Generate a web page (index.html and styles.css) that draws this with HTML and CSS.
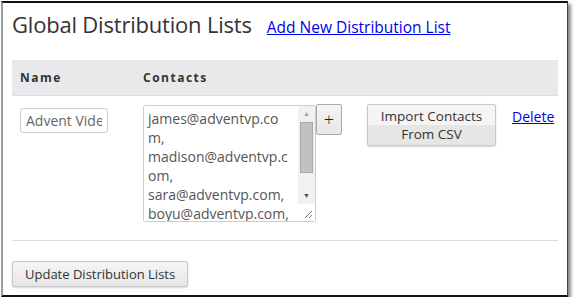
FILE: index.html
```
<!DOCTYPE html>
<html lang="en">
<head>
    <meta charset="UTF-8">
    <title>Global Distribution Lists</title>
    <link rel="stylesheet" href="styles.css">
</head>
<body>

<div class="frame">
    <div class="title-row">
        <h1>Global Distribution Lists</h1>
        <a href="#" class="add-link">Add New Distribution List</a>
    </div>

    <table class="lists">
        <tr>
            <th class="col-name">Name</th>
            <th class="col-contacts">Contacts</th>
            <th class="col-import"></th>
            <th class="col-delete"></th>
        </tr>
        <tr>
            <td class="col-name"><input class="name-input" value="Advent Video Productions"></td>
            <td class="col-contacts">
                <div class="contacts-cell">
                    <div class="contacts-box">
                        <textarea class="contacts">james@adventvp.com, madison@adventvp.com, sara@adventvp.com, boyu@adventvp.com, kevin@adventvp.com, linda@adventvp.com</textarea>
                        <div class="scrollbar">
                            <div class="arrow">&#9650;</div>
                            <div class="track"><div class="thumb"></div></div>
                            <div class="arrow">&#9660;</div>
                            <div class="corner">
                                <svg width="9" height="9" viewBox="0 0 9 9">
                                    <path d="M1 8 L8 1 M5 8 L8 5" stroke="#777" stroke-width="1" fill="none"/>
                                </svg>
                            </div>
                        </div>
                    </div>
                    <button class="btn btn-plus">+</button>
                </div>
            </td>
            <td class="col-import"><button class="btn btn-import">Import Contacts<br>From CSV</button></td>
            <td class="col-delete"><a href="#" class="delete-link">Delete</a></td>
        </tr>
    </table>

    <div class="footer">
        <button class="btn btn-update">Update Distribution Lists</button>
    </div>
</div>

</body>
</html>
```

FILE: styles.css
```
* {
    box-sizing: border-box;
}

body {
    margin: 0;
    font-family: 'Open Sans', sans-serif;
    background-color: #fff;
}

.frame {
    width: 567px;
    height: 296px;
    margin: 1px 0 0 1px;
    border-top: 2px solid #111;
    border-left: 2px solid #9a9a9a;
    border-right: 1px solid #444;
    border-bottom: 2px solid #111;
    box-shadow: 3px 3px 3px rgba(0,0,0,0.45);
    padding: 0 9px 0 9px;
    background: white;
}

.title-row {
    display: flex;
    align-items: baseline;
    padding-top: 6px;
    height: 57px;
}

h1 {
    margin: 0;
    font-size: 22px;
    font-weight: 400;
    color: #333;
    letter-spacing: -0.2px;
}

.add-link {
    margin-left: 15px;
    font-size: 15.5px;
    color: #0000ee;
}

.lists {
    width: 100%;
    border-collapse: collapse;
    table-layout: fixed;
}

.lists th {
    background-color: #e9e9eb;
    height: 35px;
    text-align: left;
    font-size: 12px;
    font-weight: 700;
    letter-spacing: 1.5px;
    color: #333;
    border-bottom: 1px solid #ddd;
    padding: 0 8px;
}

.lists td {
    vertical-align: top;
    padding: 9px 8px 18px 8px;
    border-bottom: 1px solid #ddd;
}

.col-name {
    width: 123px;
}

.col-contacts {
    width: 224px;
}

.col-import {
    width: 145px;
}

.name-input {
    width: 88px;
    height: 25px;
    margin-top: 3px;
    padding: 2px 5px;
    border: 1px solid #ccc;
    border-radius: 3px;
    font-family: 'Open Sans', sans-serif;
    font-size: 14px;
    color: #666;
}

.contacts-cell {
    display: flex;
    align-items: flex-start;
}

.contacts-box {
    display: flex;
    width: 173px;
    height: 117px;
    border: 1px solid #ccc;
    border-radius: 2px;
}

.contacts {
    flex: 1;
    min-width: 0;
    border: none;
    resize: none;
    overflow: hidden;
    padding: 3px 9px 0 4px;
    font-family: 'Open Sans', sans-serif;
    font-size: 14px;
    line-height: 19px;
    color: #555;
}

.scrollbar {
    width: 17px;
    display: flex;
    flex-direction: column;
    background-color: #f1f1f1;
}

.arrow {
    height: 16px;
    font-size: 7px;
    line-height: 16px;
    text-align: center;
    color: #a3a3a3;
}

.arrow:nth-of-type(3) {
    color: #505050;
}

.track {
    flex: 1;
    padding: 0 2px;
}

.thumb {
    height: 51px;
    background-color: #c1c1c1;
    border: 1px solid #a8a8a8;
}

.corner {
    height: 17px;
    background: white;
    display: flex;
    align-items: flex-end;
    justify-content: flex-end;
    padding: 0 2px 2px 0;
}

.btn {
    font-family: 'Open Sans', sans-serif;
    font-size: 13px;
    color: #333;
    border: 1px solid #c8c8c8;
    border-radius: 2px;
    background: linear-gradient(#f5f5f5, #e6e6e6);
    cursor: pointer;
}

.btn-plus {
    width: 26px;
    height: 31px;
    margin-top: -1px;
    padding: 0;
    font-size: 18px;
    font-weight: 300;
    color: #222;
    border-color: #aaa;
}

.btn-import {
    width: 129px;
    height: 42px;
    margin-top: -1px;
    padding: 2px 0;
    font-size: 13.5px;
    line-height: 18px;
    background: linear-gradient(#f4f4f4 50%, #e6e6e6 50%);
    box-shadow: 0 1px 2px rgba(0,0,0,0.15);
}

.delete-link {
    font-size: 14px;
    color: #0000ee;
}

.footer {
    padding-top: 20px;
}

.btn-update {
    height: 26px;
    padding: 0 12px;
    box-shadow: 0 1px 2px rgba(0,0,0,0.15);
}
```
